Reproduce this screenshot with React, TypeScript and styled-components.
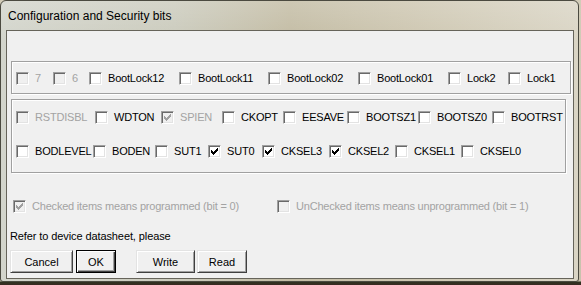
import styled, { createGlobalStyle } from 'styled-components';

const GlobalStyle = createGlobalStyle`
  html, body { margin: 0; padding: 0; }
  body {
    width: 581px;
    height: 285px;
    overflow: hidden;
    background: linear-gradient(to bottom, #d2ccb8 0, #c9c2ad 281px, #2e3320 282px, #3a2a22 285px);
    font-family: "Liberation Sans", Arial, sans-serif;
  }
`;

const Window = styled.div`
  box-sizing: border-box;
  width: 579px;
  height: 282px;
  border: 1px solid #4b4a40;
  border-radius: 6px 6px 3px 3px;
  padding: 0 4px 2px 5px;
  display: flex;
  flex-direction: column;
  background:
    linear-gradient(to bottom, rgba(255, 255, 255, 0.18), rgba(255, 255, 255, 0) 40px),
    linear-gradient(90deg, #d3d5cc 0%, #cbcbbd 30%, #c3bca4 50%, #cdc6b0 70%, #dad5c5 100%);
`;

const TitleBar = styled.div`
  height: 29px;
  display: flex;
  align-items: center;
  padding-left: 2px;
  font-size: 12px;
  color: #000;
`;

const Client = styled.div`
  flex: 1;
  display: flex;
  flex-direction: column;
  border: 1px solid #66645a;
  background: #f0f0f0;
  font-size: 11px;
`;

const GroupBox = styled.div<{ $w: number; $h: number; $top: number; $pt: number }>`
  box-sizing: border-box;
  width: ${p => p.$w}px;
  height: ${p => p.$h}px;
  margin: ${p => p.$top}px 0 0 4px;
  padding: ${p => p.$pt}px 0 0 4px;
  border: 1px solid #a0a0a0;
  box-shadow: inset 1px 1px 0 #fff, 1px 1px 0 #fff;
  display: flex;
  flex-direction: column;
  gap: 21px;
`;

const Row = styled.div`
  display: flex;
  align-items: center;
  height: 13px;
`;

const Item = styled.div<{ $w?: number; $disabled?: boolean }>`
  display: flex;
  align-items: center;
  gap: 6px;
  flex: none;
  width: ${p => (p.$w ? `${p.$w}px` : 'auto')};
  color: ${p => (p.$disabled ? '#a3a3a3' : '#000')};
  white-space: nowrap;
  line-height: 13px;
  letter-spacing: -0.2px;
`;

const Box = styled.span<{ $disabled?: boolean }>`
  box-sizing: border-box;
  width: 13px;
  height: 13px;
  flex: none;
  display: flex;
  align-items: center;
  justify-content: center;
  background: ${p => (p.$disabled ? '#f0f0f0' : '#fff')};
  border-top: 1px solid #a0a0a0;
  border-left: 1px solid #a0a0a0;
  border-right: 1px solid #fff;
  border-bottom: 1px solid #fff;
  box-shadow: inset 1px 1px 0 #696969, inset -1px -1px 0 #e3e3e3;
`;

const LegendRow = styled(Row)`
  margin: 27px 0 0 6px;
`;

const Note = styled.div`
  margin: 17px 0 0 3px;
  line-height: 13px;
  color: #000;
  letter-spacing: -0.1px;
`;

const ButtonRow = styled.div`
  display: flex;
  margin: 7px 0 0 3px;
`;

const Button = styled.div<{ $w: number; $gap: number; $default?: boolean }>`
  box-sizing: border-box;
  width: ${p => p.$w}px;
  height: 23px;
  margin-left: ${p => p.$gap}px;
  display: flex;
  align-items: center;
  justify-content: center;
  background: #f0f0f0;
  color: #000;
  border: 1px solid;
  border-color: ${p => (p.$default ? '#000' : '#e3e3e3 #404040 #404040 #e3e3e3')};
  box-shadow: ${p =>
    p.$default
      ? 'inset 1px 1px 0 #fff, inset -1px -1px 0 #404040, inset -2px -2px 0 #a0a0a0'
      : 'inset 1px 1px 0 #fff, inset -1px -1px 0 #a0a0a0'};
`;

type Bit = { label: string; w?: number; checked?: boolean; disabled?: boolean };

const lockBits: Bit[] = [
  { label: '7', w: 37, disabled: true },
  { label: '6', w: 36, disabled: true },
  { label: 'BootLock12', w: 90 },
  { label: 'BootLock11', w: 89 },
  { label: 'BootLock02', w: 90 },
  { label: 'BootLock01', w: 90 },
  { label: 'Lock2', w: 60 },
  { label: 'Lock1' },
];

const highFuses: Bit[] = [
  { label: 'RSTDISBL', w: 79, disabled: true },
  { label: 'WDTON', w: 66 },
  { label: 'SPIEN', w: 61, checked: true, disabled: true },
  { label: 'CKOPT', w: 61 },
  { label: 'EESAVE', w: 64 },
  { label: 'BOOTSZ1', w: 71 },
  { label: 'BOOTSZ0', w: 74 },
  { label: 'BOOTRST' },
];

const lowFuses: Bit[] = [
  { label: 'BODLEVEL', w: 77 },
  { label: 'BODEN', w: 62 },
  { label: 'SUT1', w: 53 },
  { label: 'SUT0', w: 54, checked: true },
  { label: 'CKSEL3', w: 67, checked: true },
  { label: 'CKSEL2', w: 66, checked: true },
  { label: 'CKSEL1', w: 66 },
  { label: 'CKSEL0' },
];

const Check = ({ color }: { color: string }) => (
  <svg width="9" height="9" viewBox="0 0 9 9" shapeRendering="crispEdges">
    <path d="M1 3 H2 V4 H3 V5 H4 V4 H5 V3 H6 V2 H7 V1 H8 V4 H7 V5 H6 V6 H5 V7 H4 V8 H3 V7 H2 V6 H1 Z" fill={color} />
  </svg>
);

const CheckBox = ({ label, w, checked, disabled }: Bit) => (
  <Item $w={w} $disabled={disabled}>
    <Box $disabled={disabled}>{checked && <Check color={disabled ? '#a0a0a0' : '#000'} />}</Box>
    <span>{label}</span>
  </Item>
);

const BitRow = ({ bits }: { bits: Bit[] }) => (
  <Row>
    {bits.map(b => (
      <CheckBox key={b.label} {...b} />
    ))}
  </Row>
);

export default function App() {
  return (
    <>
      <GlobalStyle />
      <Window>
        <TitleBar>Configuration and Security bits</TitleBar>
        <Client>
          <GroupBox $w={560} $h={33} $top={30} $pt={10}>
            <BitRow bits={lockBits} />
          </GroupBox>
          <GroupBox $w={555} $h={74} $top={5} $pt={11}>
            <BitRow bits={highFuses} />
            <BitRow bits={lowFuses} />
          </GroupBox>
          <LegendRow>
            <CheckBox label="Checked items means programmed (bit = 0)" w={264} checked disabled />
            <CheckBox label="UnChecked items means unprogrammed (bit = 1)" disabled />
          </LegendRow>
          <Note>Refer to device datasheet, please</Note>
          <ButtonRow>
            <Button $w={63} $gap={0}>Cancel</Button>
            <Button $w={40} $gap={3} $default>OK</Button>
            <Button $w={59} $gap={20}>Write</Button>
            <Button $w={50} $gap={2}>Read</Button>
          </ButtonRow>
        </Client>
      </Window>
    </>
  );
}
